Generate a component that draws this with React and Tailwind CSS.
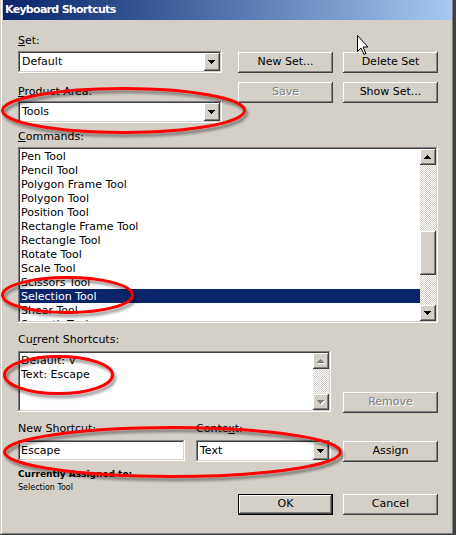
import React from 'react';

const raised = 'shadow-[inset_-1px_-1px_#404040,inset_1px_1px_#ffffff,inset_-2px_-2px_#808080,inset_2px_2px_#d4d0c8]';
const sunken = 'shadow-[inset_-1px_-1px_#ffffff,inset_1px_1px_#808080,inset_-2px_-2px_#d4d0c8,inset_2px_2px_#404040]';
const dither = 'bg-[image:repeating-conic-gradient(#ffffff_0_25%,#d4d0c8_0_50%)] bg-[length:2px_2px]';

const COMMANDS = [
  'Pen Tool',
  'Pencil Tool',
  'Polygon Frame Tool',
  'Polygon Tool',
  'Position Tool',
  'Rectangle Frame Tool',
  'Rectangle Tool',
  'Rotate Tool',
  'Scale Tool',
  'Scissors Tool',
  'Selection Tool',
  'Shear Tool',
  'Smooth Tool',
];

function Tri({ up, disabled }) {
  const d = up
    ? 'M3 0h1v1h1v1h1v1h1v1h-7v-1h1v-1h1v-1h1z'
    : 'M0 0h7v1h-1v1h-1v1h-1v1h-1v-1h-1v-1h-1v-1h-1z';
  return (
    <svg width="8" height="5" viewBox="0 0 8 5" className="block">
      {disabled && <path d={d} transform="translate(1 1)" fill="#ffffff" />}
      <path d={d} fill={disabled ? '#808080' : '#000000'} />
    </svg>
  );
}

function ArrowBtn({ up, disabled, className = '' }) {
  return (
    <div className={`w-[16px] h-[16px] bg-[#d4d0c8] flex items-center justify-center ${raised} ${className}`}>
      <Tri up={up} disabled={disabled} />
    </div>
  );
}

function Button({ children, disabled, isDefault, className = '' }) {
  if (isDefault) {
    return (
      <div className={`w-[95px] h-[21px] border border-black ${className}`}>
        <div className={`h-full flex items-center justify-center ${raised}`}>{children}</div>
      </div>
    );
  }
  return (
    <div
      className={`w-[95px] h-[21px] flex items-center justify-center ${raised} ${
        disabled ? 'text-[#808080] [text-shadow:1px_1px_0_#ffffff]' : ''
      } ${className}`}
    >
      {children}
    </div>
  );
}

function Combo({ value, className = '' }) {
  return (
    <div className={`h-[22px] bg-white p-[2px] flex ${sunken} ${className}`}>
      <div className="flex-1 pl-[2px] leading-[18px]">{value}</div>
      <ArrowBtn className="h-[18px]" />
    </div>
  );
}

function Label({ children, className = '' }) {
  return <div className={`h-[13px] leading-[13px] ${className}`}>{children}</div>;
}

export default function App() {
  return (
    <div className="w-[456px] h-[535px] relative bg-[#d4d0c8] pl-px border-r-[3px] border-b border-[#404040] text-[11px] text-black font-['DejaVu_Sans',sans-serif] overflow-hidden select-none">
      <div className="h-full border-l border-white border-r border-r-[#808080] border-b border-b-[#808080] pl-px flex flex-col">
        <div className="h-[20px] bg-linear-to-r from-[#0a246a] to-[#a6caf0] flex items-center pl-[2px]">
          <span className="text-white font-bold tracking-[-0.7px]">Keyboard Shortcuts</span>
        </div>

        <div className="pl-[15px] flex flex-col">
          <div className="flex gap-[16px] mt-[14px]">
            <div className="w-[204px] flex flex-col">
              <Label><u>S</u>et:</Label>
              <Combo value="Default" className="mt-[4px]" />
              <Label className="mt-[12px]"><u>P</u>roduct Area:</Label>
              <Combo value="Tools" className="mt-[3px]" />
            </div>
            <div className="pt-[18px] grid grid-cols-[95px_95px] gap-x-[10px] gap-y-[9px] h-fit">
              <Button>New Set...</Button>
              <Button>Delete Set</Button>
              <Button disabled>Save</Button>
              <Button>Show Set...</Button>
            </div>
          </div>

          <Label className="mt-[7px]"><u>C</u>ommands:</Label>
          <div className={`mt-[4px] w-[420px] h-[176px] bg-white p-[2px] flex ${sunken}`}>
            <div className="flex-1 overflow-hidden">
              {COMMANDS.map((c) => (
                <div
                  key={c}
                  className={`h-[14px] leading-[15px] pl-px whitespace-nowrap ${
                    c === 'Selection Tool' ? 'bg-[#0a246a] text-white' : ''
                  }`}
                >
                  {c}
                </div>
              ))}
            </div>
            <div className="w-[16px] flex flex-col">
              <ArrowBtn up />
              <div className={`h-[66px] ${dither}`} />
              <div className={`h-[44px] bg-[#d4d0c8] ${raised}`} />
              <div className={`flex-1 ${dither}`} />
              <ArrowBtn />
            </div>
          </div>

          <Label className="mt-[10px]">Cu<u>r</u>rent Shortcuts:</Label>
          <div className="flex mt-[5px]">
            <div className={`w-[313px] h-[61px] bg-white p-[2px] flex ${sunken}`}>
              <div className="flex-1 pl-px">
                <div className="h-[14px] leading-[15px]">Default: V</div>
                <div className="h-[14px] leading-[15px]">Text: Escape</div>
              </div>
              <div className="w-[16px] flex flex-col">
                <ArrowBtn up disabled />
                <div className={`flex-1 ${dither}`} />
                <ArrowBtn disabled />
              </div>
            </div>
            <Button disabled className="ml-[12px] mt-[41px] h-[20px]">Remove</Button>
          </div>

          <div className="flex mt-[9px]">
            <Label className="w-[178px]">New Shortcut:</Label>
            <Label>Conte<u>x</u>t:</Label>
          </div>
          <div className="flex mt-[5px]">
            <div className={`w-[167px] h-[21px] bg-white pl-[3px] leading-[21px] ${sunken}`}>Escape</div>
            <Combo value="Text" className="ml-[11px] w-[135px] h-[21px]" />
            <Button className="ml-[12px] mt-px h-[20px]">Assign</Button>
          </div>

          <div className="flex mt-[6px]">
            <div className="w-[220px] flex flex-col">
              <div className="h-[12px] leading-[12px] text-[9px] font-bold">Currently Assigned to:</div>
              <div className="h-[12px] leading-[12px] text-[8px] mt-[2px]">Selection Tool</div>
            </div>
            <div className="flex gap-[10px] pt-[26px]">
              <Button isDefault>OK</Button>
              <Button>Cancel</Button>
            </div>
          </div>
        </div>
      </div>

      <svg
        className="absolute left-0 top-0 pointer-events-none"
        width="456"
        height="535"
        viewBox="0 0 456 535"
      >
        <defs>
          <filter id="sh" x="-10%" y="-30%" width="120%" height="160%">
            <feDropShadow dx="2" dy="3" stdDeviation="1.6" floodColor="#000000" floodOpacity="0.45" />
          </filter>
        </defs>
        <g fill="none" stroke="#ff0000" strokeWidth="3" filter="url(#sh)">
          <ellipse cx="123.5" cy="110.5" rx="121" ry="22" />
          <ellipse cx="67.5" cy="295" rx="65" ry="17.5" />
          <ellipse cx="58.5" cy="375" rx="54" ry="18.5" />
          <ellipse cx="172.5" cy="452" rx="168" ry="24.5" />
        </g>
        <path
          d="M357.5 35.5v16l3.5-3.5 3 6.5 2-1-3-6.5h5z"
          fill="#ffffff"
          stroke="#000000"
          strokeWidth="1"
          strokeLinejoin="miter"
        />
      </svg>
    </div>
  );
}
